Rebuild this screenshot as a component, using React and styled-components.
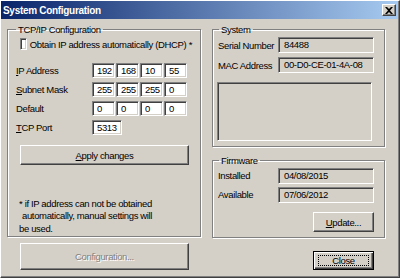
import styled, { createGlobalStyle, css } from "styled-components";

const GlobalStyle = createGlobalStyle`
  html, body { margin: 0; padding: 0; background: #d4d0c8; }
  * { box-sizing: border-box; }
  body {
    font-family: Tahoma, "Liberation Sans", Arial, sans-serif;
    font-size: 9.5px;
    letter-spacing: -0.35px;
    color: #000;
  }
`;

const raised = css`
  border: 1px solid;
  border-color: #fff #404040 #404040 #fff;
  box-shadow: inset -1px -1px #808080;
`;

const sunken = css`
  border: 1px solid;
  border-color: #808080 #fff #fff #808080;
  box-shadow: inset 1px 1px #404040, inset -1px -1px #d4d0c8;
`;

const Window = styled.div`
  width: 400px;
  height: 278px;
  background: #d4d0c8;
  border: 1px solid;
  border-color: #fff #404040 #404040 #fff;
  box-shadow: inset -1px -1px #808080;
  display: flex;
  flex-direction: column;
`;

const TitleBar = styled.div`
  height: 18px;
  margin-right: 1px;
  background: linear-gradient(to right, #0a246a, #a6caf0);
  display: flex;
  align-items: center;
  justify-content: space-between;
  padding: 0 2px;
`;

const Title = styled.span`
  color: #fff;
  font-weight: bold;
  font-size: 10px;
  letter-spacing: -0.3px;
`;

const CloseBox = styled.div`
  ${raised};
  width: 14px;
  height: 12px;
  background: #d4d0c8;
  display: flex;
  align-items: center;
  justify-content: center;
`;

const Body = styled.div`
  display: grid;
  grid-template-columns: 194px 173px;
  column-gap: 11px;
  padding: 5px 0 0 6px;
`;

const Group = styled.fieldset`
  margin: 0;
  min-width: 0;
  padding: 0 ${(p) => p.pad}px;
  border: 1px solid #808080;
  box-shadow: 1px 1px #fff, inset 1px 1px #fff;
  height: ${(p) => p.h}px;
  position: relative;
`;

const Legend = styled.legend`
  padding: 0 2px;
  margin-left: ${(p) => p.shift || 0}px;
  line-height: 11px;
`;

const Column = styled.div`
  display: flex;
  flex-direction: column;
  gap: ${(p) => p.gap || 0}px;
`;

const CheckRow = styled.label`
  display: flex;
  align-items: center;
  gap: 3px;
  margin: 3px 0 0 4px;
  white-space: nowrap;
`;

const CheckBox = styled.span`
  ${sunken};
  width: 12px;
  height: 12px;
  background: #fff;
`;

const Spacer = styled.div`
  height: ${(p) => p.h}px;
`;

const FieldRow = styled.div`
  display: flex;
  align-items: center;
  height: ${(p) => p.h || 19}px;
  white-space: nowrap;
`;

const Label = styled.span`
  width: ${(p) => p.w || 76}px;
  flex: none;
`;

const U = styled.span`
  text-decoration: underline;
`;

const Field = styled.div`
  ${sunken};
  width: ${(p) => p.w || 23}px;
  height: ${(p) => (p.readonly ? 16 : 15)}px;
  margin-right: 1px;
  background: ${(p) => (p.readonly ? "#d4d0c8" : "#fff")};
  padding: 0 0 0 ${(p) => (p.readonly ? 5 : 4)}px;
  line-height: ${(p) => (p.readonly ? 14 : 13)}px;
  white-space: nowrap;
`;

const Button = styled.div`
  ${raised};
  display: flex;
  align-items: center;
  justify-content: center;
  flex: none;
  width: ${(p) => p.w}px;
  height: ${(p) => p.h}px;
  margin-left: ${(p) => p.ml || 0}px;
  margin-top: ${(p) => p.mt || 0}px;
  background: #d4d0c8;
  color: ${(p) => (p.disabled ? "#808080" : "#000")};
  text-shadow: ${(p) => (p.disabled ? "1px 1px #fff" : "none")};
`;

const DefaultButton = styled(Button)`
  border: 1px solid #000;
  box-shadow: inset 1px 1px #fff, inset -1px -1px #404040, inset -2px -2px #808080;
`;

const FocusRing = styled.span`
  border: 1px dotted #000;
  width: 51px;
  height: 11px;
  display: flex;
  align-items: center;
  justify-content: center;
`;

const Note = styled.div`
  position: absolute;
  left: 11px;
  bottom: 1px;
  line-height: 12.5px;
  white-space: nowrap;
`;

const Indent = styled.span`
  padding-left: 3px;
`;

const EmptyBox = styled.div`
  ${sunken};
  height: 59px;
  width: 155px;
  margin: 7px 0 0 -1px;
`;

const Footer = styled.div`
  display: flex;
  justify-content: space-between;
  align-items: flex-start;
  padding: 5px 25px 0 19px;
`;

export default function App() {
  return (
    <>
      <GlobalStyle />
      <Window>
        <TitleBar>
          <Title>System Configuration</Title>
          <CloseBox>
            <svg width="8" height="7" viewBox="0 0 8 7">
              <path d="M0 0h2l2 2 2-2h2L5 3.5 8 7H6L4 5 2 7H0l3-3.5z" fill="#000" />
            </svg>
          </CloseBox>
        </TitleBar>
        <Body>
          <Group h={213} pad={8}>
            <Legend>TCP/IP Configuration</Legend>
            <CheckRow>
              <CheckBox />
              Obtain IP address automatically (DHCP) *
            </CheckRow>
            <Column>
              <Spacer h={11} />
              <FieldRow>
                <Label>
                  <U>I</U>P Address
                </Label>
                <Field>192</Field>
                <Field>168</Field>
                <Field>10</Field>
                <Field>55</Field>
              </FieldRow>
              <FieldRow>
                <Label>
                  <U>S</U>ubnet Mask
                </Label>
                <Field>255</Field>
                <Field>255</Field>
                <Field>255</Field>
                <Field>0</Field>
              </FieldRow>
              <FieldRow>
                <Label>Default</Label>
                <Field>0</Field>
                <Field>0</Field>
                <Field>0</Field>
                <Field>0</Field>
              </FieldRow>
              <FieldRow>
                <Label>
                  <U>T</U>CP Port
                </Label>
                <Field w={30}>5313</Field>
              </FieldRow>
              <Spacer h={8} />
              <Button w={169} h={20} ml={4}>
                <span>
                  <U>A</U>pply changes
                </span>
              </Button>
            </Column>
            <Note>
              * if IP address can not be obtained
              <br />
              <Indent>automatically, manual settings will</Indent>
              <br />
              be used.
            </Note>
          </Group>
          <Column gap={8}>
            <Group h={123} pad={5}>
              <Legend shift={1}>System</Legend>
              <FieldRow h={20}>
                <Label w={60}>Serial Number</Label>
                <Field readonly w={96}>84488</Field>
              </FieldRow>
              <FieldRow h={20}>
                <Label w={60}>MAC Address</Label>
                <Field readonly w={96}>00-D0-CE-01-4A-08</Field>
              </FieldRow>
              <EmptyBox />
            </Group>
            <Group h={83} pad={5}>
              <Legend shift={1}>Firmware</Legend>
              <FieldRow>
                <Label w={60}>Installed</Label>
                <Field readonly w={96}>04/08/2015</Field>
              </FieldRow>
              <FieldRow>
                <Label w={60}>Available</Label>
                <Field readonly w={96}>07/06/2012</Field>
              </FieldRow>
              <FieldRow h={28} style={{ justifyContent: "flex-end", paddingRight: 5 }}>
                <Button w={61} h={20} mt={8}>
                  <span>
                    <U>U</U>pdate...
                  </span>
                </Button>
              </FieldRow>
            </Group>
          </Column>
        </Body>
        <Footer>
          <Button w={169} h={27} disabled>
            Configuration...
          </Button>
          <DefaultButton w={61} h={19} mt={8}>
            <FocusRing>Close</FocusRing>
          </DefaultButton>
        </Footer>
      </Window>
    </>
  );
}
